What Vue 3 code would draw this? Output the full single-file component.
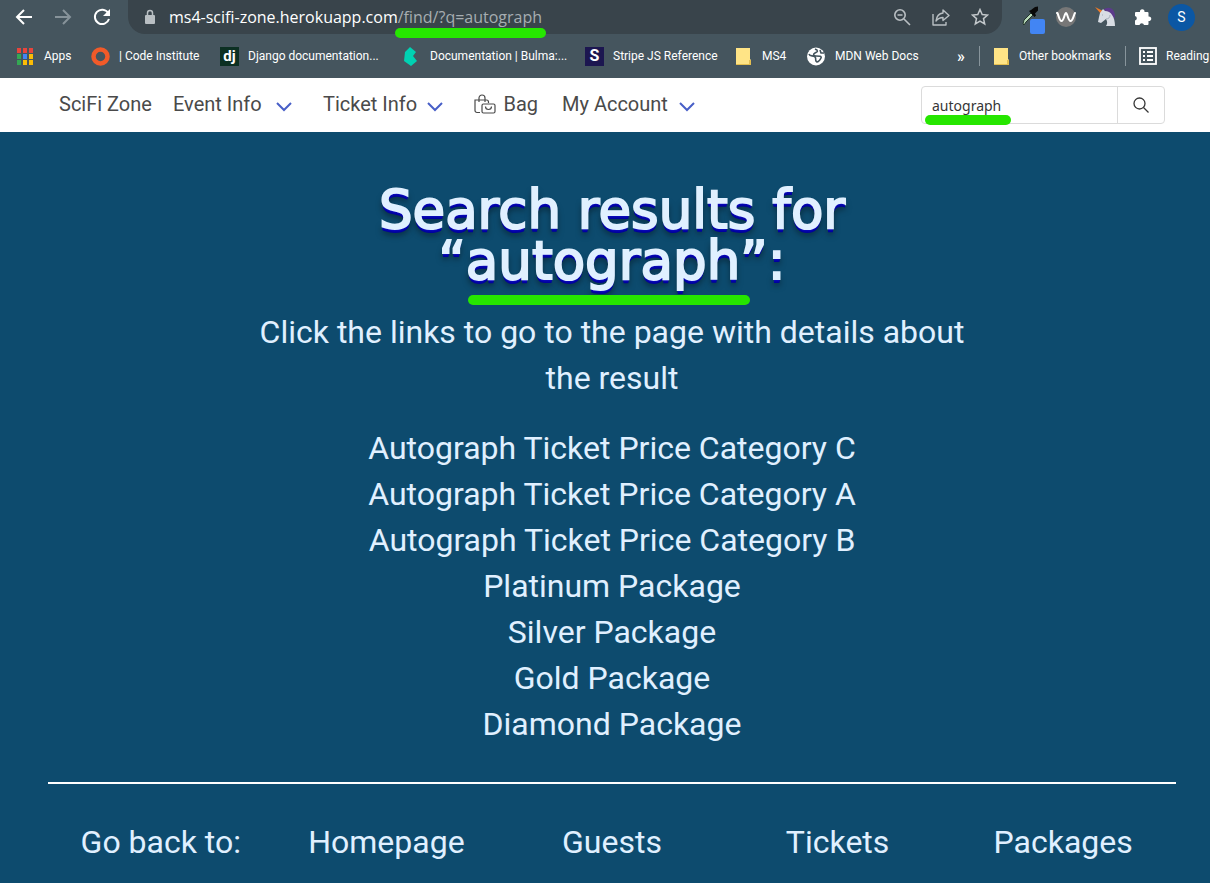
<script setup>
import { ref } from 'vue'

const query = ref('autograph')
const url = ref('ms4-scifi-zone.herokuapp.com/find/?q=autograph')

const bookmarks = [
  { icon: 'apps', label: 'Apps' },
  { icon: 'code', label: '| Code Institute' },
  { icon: 'django', label: 'Django documentation...' },
  { icon: 'bulma', label: 'Documentation | Bulma:...' },
  { icon: 'stripe', label: 'Stripe JS Reference' },
  { icon: 'folder', label: 'MS4' },
  { icon: 'mdn', label: 'MDN Web Docs' },
]

const appDots = ['#e8453c', '#e8453c', '#e8453c', '#34a853', '#4285f4', '#fbbc05', '#34a853', '#fbbc05', '#fbbc05']

const results = [
  'Autograph Ticket Price Category C',
  'Autograph Ticket Price Category A',
  'Autograph Ticket Price Category B',
  'Platinum Package',
  'Silver Package',
  'Gold Package',
  'Diamond Package',
]

const footerLinks = ['Homepage', 'Guests', 'Tickets', 'Packages']
</script>

<template>
  <div class="screen">
    <header class="browser">
      <div class="toolbar">
        <div class="controls">
          <button type="button" aria-label="Back">
            <svg width="18" height="18" viewBox="0 0 18 18" fill="none" stroke="#fff" stroke-width="2"><path d="M17 9H2M9 2L2 9l7 7" /></svg>
          </button>
          <button type="button" aria-label="Forward">
            <svg width="18" height="18" viewBox="0 0 18 18" fill="none" stroke="#87939a" stroke-width="2"><path d="M1 9h15M9 2l7 7-7 7" /></svg>
          </button>
          <button type="button" aria-label="Reload">
            <svg width="18" height="18" viewBox="0 0 18 18" fill="none" stroke="#fff" stroke-width="2"><path d="M15.200 5A7.200 7.200 0 1 0 16 11" /><path d="M17 1v7h-7z" fill="#fff" stroke="none" /></svg>
          </button>
        </div>
        <div class="address">
          <svg class="lock" width="12" height="16" viewBox="0 0 12 16"><rect x="1" y="6" width="10" height="9" rx="1" fill="#b9bfc3" /><path d="M3.500 6V4a2.500 2.500 0 0 1 5 0v2" fill="none" stroke="#b9bfc3" stroke-width="1.500" /></svg>
          <div class="url" :aria-label="url"><span>ms4-scifi-zone.herokuapp.com</span><span class="path">/find/?q=autograph<i class="marker"></i></span></div>
          <div class="actions">
            <button type="button" aria-label="Zoom">
              <svg width="18" height="18" viewBox="0 0 18 18" fill="none" stroke="#b9bfc3" stroke-width="1.600"><circle cx="7" cy="7" r="5.200" /><path d="M11 11l6 6M4.500 7h5" /></svg>
            </button>
            <button type="button" aria-label="Share">
              <svg width="18" height="18" viewBox="0 0 18 18" fill="none" stroke="#b9bfc3" stroke-width="1.400" stroke-linejoin="round"><path d="M1 6v11h13v-3" /><path d="M4 13c.6-5 3-7.500 7-8V2l6 5.500-6 5V9.500C8 9.500 6 10.500 4 13z" /></svg>
            </button>
            <button type="button" aria-label="Bookmark this page">
              <svg width="18" height="18" viewBox="0 0 18 18" fill="none" stroke="#c3c8cb" stroke-width="1.500"><path d="M9 1.500l2.200 5 5.400.5-4.100 3.600 1.200 5.400L9 13.200 4.300 16l1.200-5.400L1.400 7l5.400-.5z" /></svg>
            </button>
          </div>
        </div>
        <div class="extensions">
          <button type="button" aria-label="Color picker">
            <svg width="26" height="28" viewBox="0 0 26 28"><path d="M3 18l1-4 7-7 2 2-7 7-2 3z" fill="#b7d8b8" stroke="#23362b" /><path d="M9 5l2-1 4-3 3-.5v4l-3 3 1 2-1.500 1.500z" fill="#090909" /><rect x="10" y="13" width="15" height="15" rx="2" fill="#4285f4" /></svg>
          </button>
          <button type="button" aria-label="Wave">
            <svg width="20" height="20" viewBox="0 0 20 20"><circle cx="10" cy="10" r="10" fill="#777" /><path d="M1 6c1-1 2 8 4.500 8S8.500 6 10 6s2 8 4.500 8S18 7 19 6" fill="none" stroke="#fff" stroke-width="2" stroke-linecap="round" /></svg>
          </button>
          <button type="button" aria-label="Unicorn">
            <svg width="22" height="22" viewBox="0 0 22 22"><path d="M9 4c6-5 12-1 12 6l-1 4-4-3-4-6z" fill="#5c3a8c" /><path d="M1 1l8 4-2 3z" fill="#ee7b27" /><path d="M6 7l3-4 2 2c6 0 10 6 10 15h-9c2-3 1-5 0-7l-5 4-3-1 1-5z" fill="#d8dde4" /><path d="M12 13c3 0 4-2 4-4M8 9h1" fill="none" stroke="#a5afbb" /></svg>
          </button>
          <button type="button" aria-label="Extensions">
            <svg width="18" height="18" viewBox="0 0 18 18" fill="#fff"><path d="M1 5a1 1 0 0 1 1-1h4a2.300 2.300 0 1 1 4.500 0h3a1 1 0 0 1 1 1v3.500a2.300 2.300 0 1 1 0 4.500v3a1 1 0 0 1-1 1H10a2.300 2.300 0 0 0-4.500 0H2a1 1 0 0 1-1-1v-3.500a2.300 2.300 0 0 0 0-4.500z" /></svg>
          </button>
          <button type="button" class="avatar" aria-label="Profile">S</button>
        </div>
      </div>

      <nav class="bookmarks" aria-label="Bookmarks">
        <a v-for="b in bookmarks" :key="b.label" href="#" class="bookmark">
          <svg v-if="b.icon === 'apps'" width="19" height="19" viewBox="0 0 19 19"><rect v-for="(c, i) in appDots" :key="i" :x="(i % 3) * 6 + 1" :y="Math.floor(i / 3) * 6 + 1" width="4" height="5" :fill="c" /></svg>
          <svg v-else-if="b.icon === 'code'" width="19" height="19" viewBox="0 0 19 19"><circle cx="9.500" cy="9.500" r="7" fill="none" stroke="#f15a29" stroke-width="4.500" /></svg>
          <span v-else-if="b.icon === 'django'" class="tile django">dj</span>
          <svg v-else-if="b.icon === 'bulma'" width="19" height="19" viewBox="0 0 19 19"><path d="M8 0l6 5-3 4 4 5-6 5-7-5 1-9z" fill="#00d1b2" /></svg>
          <span v-else-if="b.icon === 'stripe'" class="tile stripe">S</span>
          <svg v-else-if="b.icon === 'folder'" width="17" height="19" viewBox="0 0 17 19"><path d="M0 1h14v11l1 1v5H0z" fill="#ffe486" /><path d="M0 18h15v-5h-2v4H0z" fill="#e5bf50" /></svg>
          <svg v-else width="19" height="19" viewBox="0 0 19 19"><circle cx="9" cy="9.500" r="9" fill="#fff" /><path d="M2 7c1 3 4 1 6 3s-1 3 2 5c2 0 3-2 4-4s-2-2-5-2-3-2-1-3 3-1 2-3L8 2M13 3l1 3 3 0" fill="none" stroke="#43535c" stroke-width="1.600" /></svg>
          <span>{{ b.label }}</span>
        </a>
        <button type="button" class="more" aria-label="More bookmarks">»</button>
        <a href="#" class="bookmark split">
          <svg width="17" height="19" viewBox="0 0 17 19"><path d="M1 1h14v11l1 1v5H1z" fill="#ffe486" /><path d="M1 18h15v-5h-2v4H1z" fill="#e5bf50" /></svg>
          <span>Other bookmarks</span>
        </a>
        <a href="#" class="bookmark split">
          <svg width="18" height="18" viewBox="0 0 18 18" fill="none" stroke="#fff" stroke-width="1.800"><rect x="1" y="1" width="16" height="16" /><path d="M4 5h2M8 5h6M4 9h2M8 9h6M4 13h2M8 13h6" /></svg>
          <span>Reading</span>
        </a>
      </nav>
    </header>

    <nav class="site-nav" aria-label="Main">
      <a href="#" class="nav-item home">SciFi Zone</a>
      <a href="#" class="nav-item event">Event Info
        <svg class="chevron" width="16" height="10" viewBox="0 0 16 10"><path d="M1 1l7 7 7-7" /></svg>
      </a>
      <a href="#" class="nav-item ticket">Ticket Info
        <svg class="chevron" width="16" height="10" viewBox="0 0 16 10"><path d="M1 1l7 7 7-7" /></svg>
      </a>
      <a href="#" class="nav-item bag">
        <svg width="22" height="20" viewBox="0 0 22 20" fill="none" stroke="#4a4a4a" stroke-width="1.200"><path d="M5 8V4a3 3 0 0 1 6 0v4M6 18.500H3a2 2 0 0 1-2-2V6h11.500a2 2 0 0 1 2 2v1" /><rect x="8" y="10" width="13" height="9" rx="1.500" /><path d="M11.500 12.500c0 4 6 4 6 0" /></svg>
        Bag
      </a>
      <a href="#" class="nav-item account">My Account
        <svg class="chevron" width="16" height="10" viewBox="0 0 16 10"><path d="M1 1l7 7 7-7" /></svg>
      </a>
      <form class="search" role="search" @submit.prevent>
        <input v-model="query" type="text" aria-label="Search" />
        <button type="submit" aria-label="Search">
          <svg width="16" height="16" viewBox="0 0 16 16" fill="none" stroke="#363636" stroke-width="1.300"><circle cx="6.500" cy="6.500" r="5.500" /><path d="M10.500 10.500l5 5" /></svg>
        </button>
        <i class="marker"></i>
      </form>
    </nav>

    <main class="content">
      <h1>Search results for<br /><span class="term">“autograph”:<i class="marker"></i></span></h1>
      <p class="intro">Click the links to go to the page with details about the result</p>
      <ul class="results">
        <li v-for="r in results" :key="r"><a href="#">{{ r }}</a></li>
      </ul>
      <hr />
      <footer class="footer">
        <span>Go back to:</span>
        <a v-for="l in footerLinks" :key="l" href="#">{{ l }}</a>
      </footer>
    </main>
  </div>
</template>

<style>
body {
  margin: 0;
  background: #0d4b6e;
}
</style>

<style scoped>
* {
  box-sizing: border-box;
}
.screen {
  min-height: 100vh;
  overflow: hidden;
  background: #0d4b6e;
  font-family: Roboto, "Liberation Sans", sans-serif;
}
button {
  display: flex;
  align-items: center;
  justify-content: center;
  padding: 0;
  border: 0;
  background: none;
  font: inherit;
}
a {
  color: inherit;
  text-decoration: none;
}
svg {
  flex: none;
}
.marker {
  position: absolute;
  height: 10px;
  border-radius: 5px;
  background: #26e600;
}
.browser {
  height: 78px;
  background: #45555e;
  color: #fff;
  font-family: "Open Sans", "Noto Sans", sans-serif;
}
.toolbar {
  display: flex;
  height: 34px;
}
.controls {
  display: flex;
  flex: none;
  width: 128px;
  padding-left: 15px;
  gap: 21px;
}
.address {
  display: flex;
  flex: 1;
  align-items: center;
  padding: 0 13px 0 16px;
  border-radius: 0 0 17px 17px;
  background: #39444b;
}
.url {
  flex: 1;
  padding-left: 13px;
  font-size: 16px;
  line-height: 34px;
  white-space: nowrap;
}
.path {
  position: relative;
  color: #a6adb1;
}
.path .marker {
  left: -3px;
  right: -4px;
  top: 22px;
}
.actions {
  display: flex;
  gap: 21px;
}
.extensions {
  display: flex;
  flex: none;
  align-items: center;
  width: 208px;
  padding-left: 18px;
  gap: 10px;
}
.extensions button:nth-child(1) {
  padding-top: 6px;
}
.extensions button:nth-child(3) {
  margin-left: 8px;
}
.extensions button:nth-child(4) {
  margin-left: 8px;
}
.extensions .avatar {
  width: 27px;
  height: 27px;
  margin-left: 6px;
  border-radius: 50%;
  background: #0b57a4;
  color: #fff;
  font-family: Roboto, sans-serif;
  font-size: 14px;
}
.bookmarks {
  display: grid;
  grid-template-columns: 75px 129px 182px 183px 151px 71px 143px 29px 146px 1fr;
  align-items: center;
  height: 44px;
  padding-left: 16px;
  font-family: Roboto, sans-serif;
  font-size: 12px;
  white-space: nowrap;
}
.bookmark {
  display: flex;
  align-items: center;
  gap: 9px;
}
.split {
  height: 20px;
  padding-left: 13px;
  border-left: 1px solid #88959c;
}
.more {
  justify-content: flex-start;
  padding-left: 7px;
  color: #fff;
  font-size: 16px;
  font-weight: 600;
}
.tile {
  width: 19px;
  height: 19px;
  color: #fff;
  font-weight: 700;
  line-height: 18px;
  text-align: center;
}
.django {
  background: #0c3023;
  font-size: 15px;
}
.stripe {
  background: #1c1650;
  font-size: 16px;
}
.site-nav {
  display: flex;
  align-items: center;
  height: 54px;
  padding: 0 45px 0 59px;
  background: #fff;
  color: #4a4a4a;
  font-size: 20px;
}
.nav-item {
  display: flex;
  align-items: center;
  justify-content: space-between;
  flex: none;
  padding-bottom: 2px;
  white-space: nowrap;
}
.home {
  width: 91px;
  margin-right: 23px;
}
.event {
  width: 119px;
  margin-right: 31px;
}
.ticket {
  width: 120px;
  margin-right: 31px;
}
.bag {
  width: 64px;
  margin-right: 24px;
}
.account {
  width: 133px;
}
.chevron {
  margin-top: 6px;
  fill: none;
  stroke: #485fc7;
  stroke-width: 2;
}
.search {
  position: relative;
  display: flex;
  width: 244px;
  height: 38px;
  margin-left: auto;
  border: 1px solid #dbdbdb;
  border-radius: 4px;
}
.search input {
  flex: 1;
  min-width: 0;
  padding: 0 10px;
  border: 0;
  outline: 0;
  background: transparent;
  color: #363636;
  font: 14px "Noto Sans", sans-serif;
}
.search button {
  width: 47px;
  border-left: 1px solid #dbdbdb;
}
.search .marker {
  left: 3px;
  bottom: -2px;
  width: 86px;
}
.content {
  padding: 52px 34px 0 48px;
  color: #e0f0ff;
  font-size: 32px;
  line-height: 46px;
  text-align: center;
}
h1 {
  margin: 0;
  color: #e0f0ff;
  font-family: "DejaVu Sans", sans-serif;
  font-size: 53px;
  font-weight: 400;
  line-height: 51px;
  -webkit-text-stroke: 2px #e0f0ff;
  text-shadow: 0 1px 0 #1515c8, 0 2px 0 #0808b8, 0 3px 0 #0404a8, 0 4px 0 #0000a0, 0 6px 6px rgba(0, 0, 0, 0.5);
}
.term {
  position: relative;
}
.term .marker {
  left: 30px;
  right: 36px;
  bottom: -14px;
}
.intro {
  max-width: 720px;
  margin: 23px auto 24px;
}
.results {
  margin: 0;
  padding: 0;
  list-style: none;
}
hr {
  height: 2px;
  margin: 35px 0;
  border: 0;
  background: #fff;
}
.footer {
  display: grid;
  grid-template-columns: repeat(5, 1fr);
}
</style>
